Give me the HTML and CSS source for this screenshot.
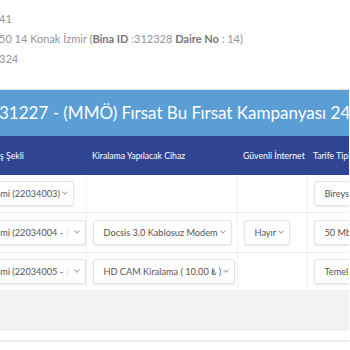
FILE: index.html
```html
<!DOCTYPE html>
<html lang="tr">
<head>
  <meta charset="UTF-8">
  <title>Kampanya Detayı</title>
  <meta name="viewport" content="width=device-width, initial-scale=1.0">
  <link rel="stylesheet" href="styles.css">
</head>
<body>
  <div class="page">
    <div class="info">
      <p>41</p>
      <p>50 14 Konak İzmir (<b>Bina ID</b> :312328 <b>Daire No</b> : 14)</p>
      <p>324</p>
    </div>

    <div class="campaign">
      <h2 class="campaign-title">31227 - (MMÖ) Fırsat Bu Fırsat Kampanyası 24</h2>
      <table class="lines">
        <colgroup>
          <col class="col-pay">
          <col class="col-device">
          <col class="col-safe">
          <col class="col-tariff">
        </colgroup>
        <thead>
          <tr>
            <th>ş Şekli</th>
            <th>Kiralama Yapılacak Cihaz</th>
            <th>Güvenli İnternet</th>
            <th>Tarife Tipi</th>
          </tr>
        </thead>
        <tbody>
          <tr class="row-a">
            <td><div class="select first">imi (22034003) <span class="chev"></span></div></td>
            <td></td>
            <td></td>
            <td><div class="select">Bireyse <span class="chev"></span></div></td>
          </tr>
          <tr class="row-b">
            <td><div class="select first">imi (22034004 - <span class="cut">|</span><span class="chev"></span></div></td>
            <td><div class="select">Docsis 3.0 Kablosuz Modem <span class="chev"></span></div></td>
            <td><div class="select">Hayır <span class="chev"></span></div></td>
            <td><div class="select">50 Mb <span class="chev"></span></div></td>
          </tr>
          <tr class="row-a">
            <td><div class="select first">imi (22034005 - <span class="cut">|</span><span class="chev"></span></div></td>
            <td><div class="select">HD CAM Kiralama ( 10.00 ₺ ) <span class="chev"></span></div></td>
            <td></td>
            <td><div class="select">Temel <span class="chev"></span></div></td>
          </tr>
        </tbody>
      </table>
      <div class="footer-band"></div>
    </div>
    <div class="next-box"></div>
  </div>
</body>
</html>
```

FILE: styles.css
```css
html, body { margin: 0; padding: 0; background: #fff; overflow: hidden; }
body { font-family: Lato, "Open Sans", sans-serif; color: #555; }
.page { width: 350px; overflow: hidden; margin-left: -1px; }

.info { padding: 9px 0 0 0; }
.info p { margin: 0; height: 20px; line-height: 20px; font-size: 11px; color: #959595; }
.info b { font-weight: 700; color: #777; }

.campaign { margin-top: 20px; border-top: 1px solid #e8e8e8; }
.campaign-title { margin: 0; height: 46px; line-height: 45px; background: #5b9dd5; color: #fff; font-size: 17px; font-weight: 400; white-space: nowrap; }

.lines { border-collapse: collapse; table-layout: fixed; width: 351px; }
.col-pay { width: 87px; }
.col-device { width: 151px; }
.col-safe { width: 70px; }
.col-tariff { width: 43px; }
.lines th { height: 39px; background: #2f4594; color: #fff; font-size: 8.7px; font-weight: 400; text-align: left; padding: 0 0 0 6px; white-space: nowrap; overflow: hidden; }
.lines th:first-child { padding-left: 1px; }
.lines td { height: 37px; padding: 0 0 0 6px; border: 1px solid #efefef; border-top: none; vertical-align: middle; white-space: nowrap; overflow: hidden; }
.lines td:first-child { border-left: none; padding-left: 0; }
.lines tr.row-b td { height: 39px; }

.select { display: inline-flex; align-items: center; height: 23px; padding: 0 6px 0 10px; border: 1px solid #e3e3e3; border-radius: 3px; background: #fff; box-shadow: 0 1px 2px rgba(0,0,0,0.08); font-size: 9.2px; color: #555; white-space: nowrap; }
.select.first { padding-left: 0; border-left: none; border-radius: 0 3px 3px 0; margin-left: -1px; }
.cut { color: #ddd; margin: 0 4px 0 3px; }
.chev { display: inline-block; width: 3px; height: 3px; border-right: 1px solid #aaa; border-bottom: 1px solid #aaa; transform: rotate(45deg); margin: -3px 0 0 3px; }

.footer-band { height: 40px; background: #f2f2f2; }
.next-box { margin-top: 9px; border-top: 2px solid #ececec; height: 20px; }
```
